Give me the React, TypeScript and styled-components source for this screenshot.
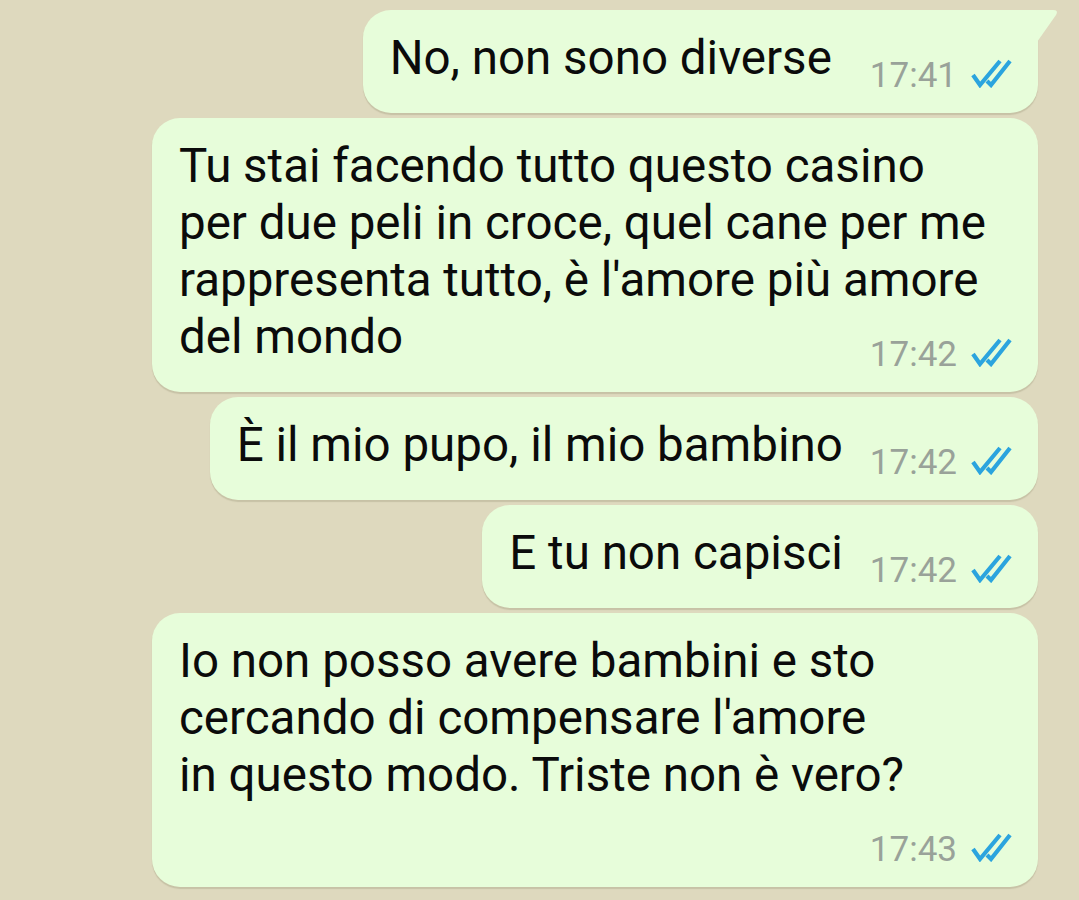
import styled, { createGlobalStyle } from "styled-components";

const CHAT_BG = "#DED9BE";
const BUBBLE_BG = "#E7FDDA";
const TIME_COLOR = "#99A299";
const TICK_COLOR = "#2BA4DE";

const GlobalStyle = createGlobalStyle`
  html, body {
    margin: 0;
    padding: 0;
    background: ${CHAT_BG};
  }
  body {
    font-family: Roboto, "Noto Sans", "Liberation Sans", sans-serif;
  }
`;

const Chat = styled.div`
  width: 1079px;
  height: 900px;
  overflow: hidden;
  box-sizing: border-box;
  padding: 10px 41px 0 0;
  display: flex;
  flex-direction: column;
  align-items: flex-end;
  gap: 5px;
`;

const Bubble = styled.div<{ $tail?: boolean; $wide?: boolean }>`
  position: relative;
  display: flow-root;
  box-sizing: border-box;
  width: ${(p) => (p.$wide ? "886px" : "auto")};
  max-width: 886px;
  padding: 20px 26px 19px 27px;
  background: ${BUBBLE_BG};
  border-radius: 28px;
  border-top-right-radius: ${(p) => (p.$tail ? "0" : "28px")};
  box-shadow: 0 2px 1px rgba(120, 115, 80, 0.22);
  color: #0b0b0b;
  font-size: 47.5px;
  line-height: 57px;
`;

const Tail = styled.svg`
  position: absolute;
  top: 0;
  right: -21px;
  width: 22px;
  height: 33px;
`;

const Text = styled.span`
  white-space: pre-line;
`;

const Meta = styled.div<{ $gap: number }>`
  float: right;
  display: flex;
  align-items: flex-start;
  margin: 28px 0 0 ${(p) => p.$gap}px;
  font-size: 35px;
  line-height: 36px;
  color: ${TIME_COLOR};
`;

const Ticks = styled.svg`
  width: 42px;
  height: 29px;
  margin: 1px 0 0 13px;
`;

type Message = {
  text: string;
  time: string;
  tail?: boolean;
  wide?: boolean;
  gap?: number;
};

const MESSAGES: Message[] = [
  { text: "No, non sono diverse", time: "17:41", tail: true, gap: 38 },
  {
    text:
      "Tu stai facendo tutto questo casino\nper due peli in croce, quel cane per me\nrappresenta tutto, è l'amore più amore\ndel mondo",
    time: "17:42",
    wide: true,
  },
  { text: "È il mio pupo, il mio bambino", time: "17:42" },
  { text: "E tu non capisci", time: "17:42" },
  {
    text:
      "Io non posso avere bambini e sto\ncercando di compensare l'amore\nin questo modo. Triste non è vero?",
    time: "17:43",
    wide: true,
  },
];

function DoubleTick() {
  return (
    <Ticks viewBox="0 0 42 29">
      <path
        d="M3 16 L10 26 L30 2"
        fill="none"
        stroke={TICK_COLOR}
        strokeWidth={4.2}
      />
      <path
        d="M17 22 L21 26 L40 2"
        fill="none"
        stroke={TICK_COLOR}
        strokeWidth={4.2}
      />
    </Ticks>
  );
}

export default function App() {
  return (
    <>
      <GlobalStyle />
      <Chat>
        {MESSAGES.map((m, i) => (
          <Bubble key={i} $tail={m.tail} $wide={m.wide}>
            {m.tail && (
              <Tail viewBox="0 0 22 33">
                <path d="M0 0 L16 0 Q22 0 19 5 L0 32 Z" fill={BUBBLE_BG} />
              </Tail>
            )}
            <Text>{m.text}</Text>
            <Meta $gap={m.gap ?? 27}>
              <span>{m.time}</span>
              <DoubleTick />
            </Meta>
          </Bubble>
        ))}
      </Chat>
    </>
  );
}
